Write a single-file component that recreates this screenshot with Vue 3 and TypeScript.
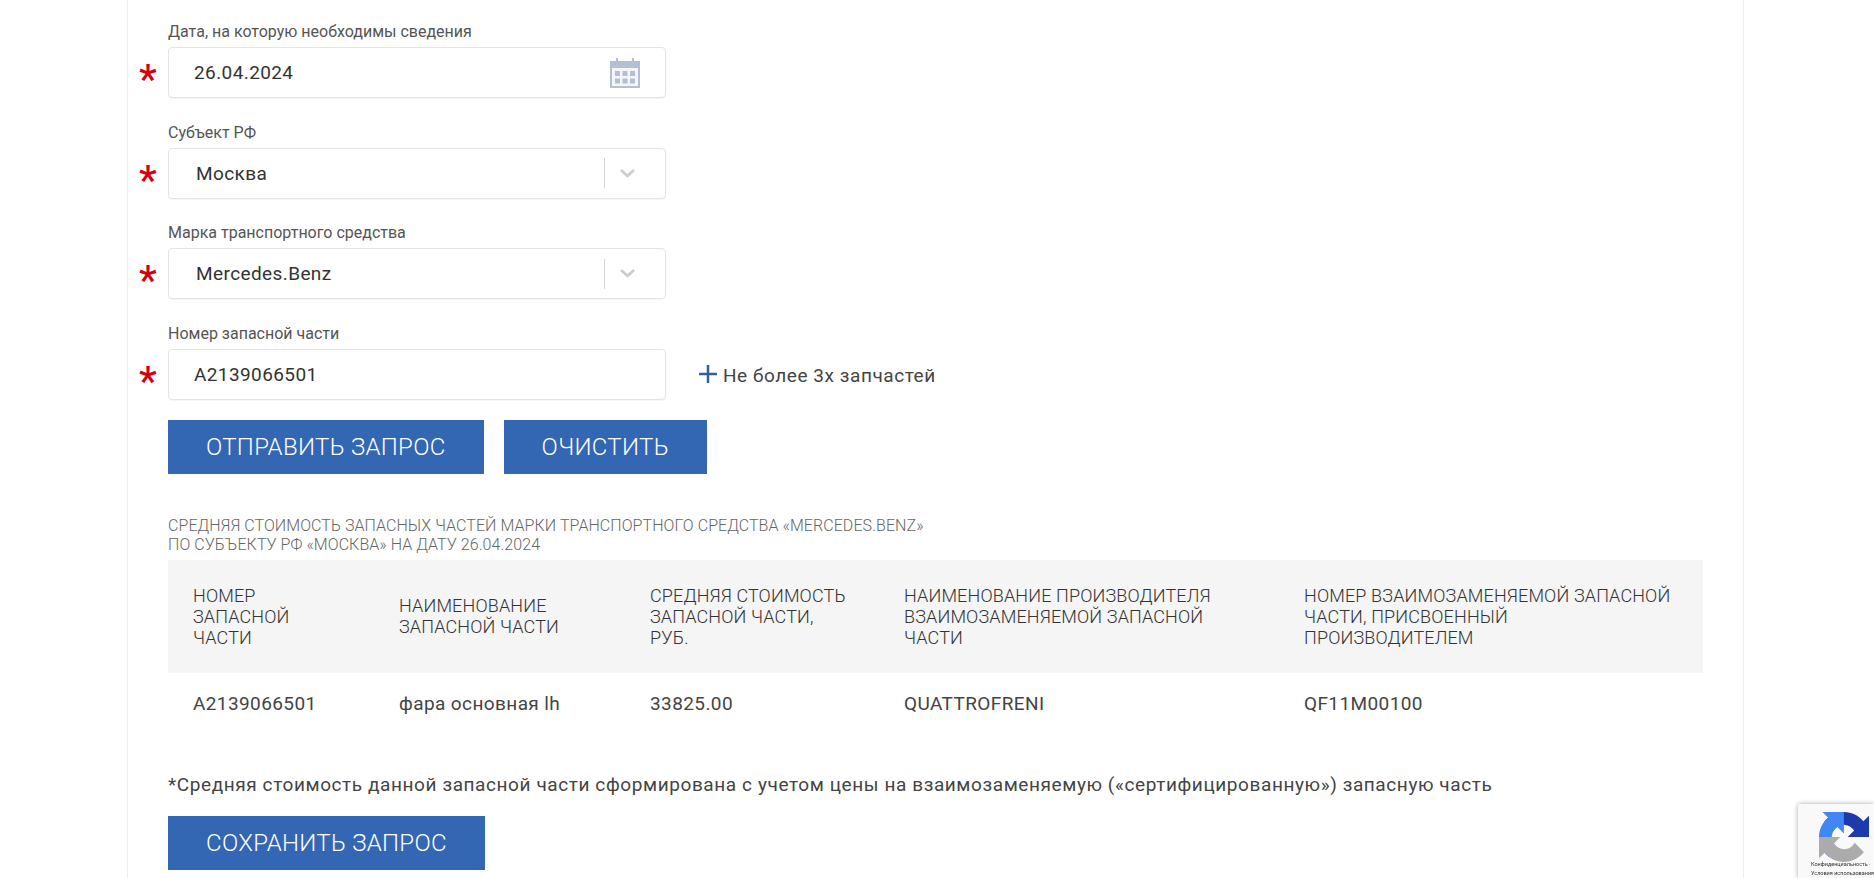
<script setup lang="ts">
interface Column { title: string; value: string; cls: string }

const columns: Column[] = [
  { title: 'Номер запасной части', value: 'A2139066501', cls: 'c1' },
  { title: 'Наименование запасной части', value: 'фара основная lh', cls: 'c2' },
  { title: 'Средняя стоимость запасной части, руб.', value: '33825.00', cls: 'c3' },
  { title: 'Наименование производителя взаимозаменяемой запасной части', value: 'QUATTROFRENI', cls: 'c4' },
  { title: 'Номер взаимозаменяемой запасной части, присвоенный производителем', value: 'QF11M00100', cls: 'c5' },
]
</script>

<template>
  <div class="page">
    <main class="card">
      <section class="field">
        <label class="label">Дата, на которую необходимы сведения</label>
        <div class="row">
          <span class="star">*</span>
          <div class="control date">
            <span class="value">26.04.2024</span>
            <svg class="cal" viewBox="0 0 30 30" width="30" height="30" aria-hidden="true">
              <path d="M0 3h30v27H0z" fill="#b3bfd3" />
              <path d="M2 10h26v18H2z" fill="#f3f5f9" />
              <path d="M6 0h2v6H6zM22 0h2v6h-2z" fill="#b3bfd3" />
              <path d="M5 13h5v5H5zM12.500 13h5v5h-5zM20 13h5v5h-5zM5 20.500h5v5H5zM12.500 20.500h5v5h-5zM20 20.500h5v5h-5z" fill="#b3bfd3" />
            </svg>
          </div>
        </div>
      </section>

      <section class="field">
        <label class="label">Субъект РФ</label>
        <div class="row">
          <span class="star">*</span>
          <div class="control select">
            <span class="value">Москва</span>
            <span class="sep"></span>
            <svg class="chev" viewBox="0 0 15 9" width="15" height="9" aria-hidden="true">
              <path d="M1 1l6.500 6 6.500-6" fill="none" stroke="#cccccc" stroke-width="2.600" />
            </svg>
          </div>
        </div>
      </section>

      <section class="field">
        <label class="label">Марка транспортного средства</label>
        <div class="row">
          <span class="star">*</span>
          <div class="control select">
            <span class="value">Mercedes.Benz</span>
            <span class="sep"></span>
            <svg class="chev" viewBox="0 0 15 9" width="15" height="9" aria-hidden="true">
              <path d="M1 1l6.500 6 6.500-6" fill="none" stroke="#cccccc" stroke-width="2.600" />
            </svg>
          </div>
        </div>
      </section>

      <section class="field last">
        <label class="label">Номер запасной части</label>
        <div class="row">
          <span class="star">*</span>
          <div class="control date">
            <span class="value">A2139066501</span>
          </div>
          <div class="add">
            <svg class="plus" viewBox="0 0 18 18" width="18" height="18" aria-hidden="true">
              <path d="M7.750 0h2.500v18h-2.500zM0 7.750h18v2.500H0z" fill="#2f5f9f" />
            </svg>
            <span>Не более 3х запчастей</span>
          </div>
        </div>
      </section>

      <div class="actions">
        <button class="btn send" type="button">Отправить запрос</button>
        <button class="btn clear" type="button">Очистить</button>
      </div>

      <h2 class="title">
        Средняя стоимость запасных частей марки транспортного средства «Mercedes.Benz»<br />
        по субъекту РФ «Москва» на дату 26.04.2024
      </h2>

      <table class="table">
        <thead>
          <tr>
            <th v-for="c in columns" :key="c.cls" :class="c.cls">{{ c.title }}</th>
          </tr>
        </thead>
        <tbody>
          <tr>
            <td v-for="c in columns" :key="c.cls">{{ c.value }}</td>
          </tr>
        </tbody>
      </table>

      <p class="note">*Средняя стоимость данной запасной части сформирована с учетом цены на взаимозаменяемую («сертифицированную») запасную часть</p>

      <button class="btn save" type="button">Сохранить запрос</button>
    </main>

    <aside class="badge">
      <svg class="logo" viewBox="0 0 64 64" width="50" height="50" aria-hidden="true">
        <path d="M64 31.955l-.033-1.37V4.687l-7.16 7.16C50.948 4.674 42.033.093 32.05.093c-10.4 0-19.622 4.96-25.458 12.64l11.736 11.86a15.55 15.55 0 0 1 4.754-5.334c2.05-1.6 4.952-2.906 8.968-2.906.485 0 .86.057 1.135.163 4.976.393 9.288 3.14 11.828 7.124l-8.307 8.307 26.29.001" fill="#1c3aa9" />
        <path d="M31.862.094l-1.37.033H4.594l7.16 7.16C4.58 13.147 0 22.06 0 32.046c0 10.4 4.96 19.622 12.64 25.458l11.86-11.736a15.55 15.55 0 0 1-5.334-4.754c-1.6-2.05-2.906-4.952-2.906-8.968 0-.485.057-.86.163-1.135.393-4.976 3.14-9.288 7.124-11.828l8.307 8.307V.094" fill="#4285f4" />
        <path d="M.001 32.045l.033 1.37v25.898l7.16-7.16c5.86 7.173 14.774 11.754 24.76 11.754 10.4 0 19.622-4.96 25.458-12.64l-11.736-11.86a15.55 15.55 0 0 1-4.754 5.334c-2.05 1.6-4.952 2.906-8.968 2.906-.485 0-.86-.057-1.135-.163-4.976-.393-9.288-3.14-11.828-7.124l8.307-8.307-26.29-.001" fill="#ababab" />
      </svg>
      <div class="legal">Конфиденциальность ·<br />Условия использования</div>
    </aside>
  </div>
</template>

<style>
html, body { margin: 0; background: #fff; overflow: hidden; }
</style>

<style scoped>
.page {
  height: 878px;
  overflow: hidden;
  background: #fff;
  font-family: Roboto, "Liberation Sans", sans-serif;
  color: #333;
}
.card {
  box-sizing: border-box;
  width: 1617px;
  height: 878px;
  margin-left: 127px;
  padding: 22px 40px 0 10px;
  border-left: 1px solid #ededed;
  border-right: 1px solid #ededed;
}
.field { margin-bottom: 24.670px; }
.field.last { margin-bottom: 20px; }
.label {
  display: block;
  margin-left: 30px;
  height: 20px;
  margin-bottom: 5px;
  font-size: 16px;
  line-height: 20px;
  color: #555;
}
.row { display: flex; align-items: center; }
.star {
  width: 30px;
  height: 51px;
  color: #d40010;
  font-size: 40px;
  font-weight: 500;
  line-height: 65px;
  padding-left: 1px;
  margin-right: -1px;
  text-align: left;
}
.control {
  box-sizing: border-box;
  width: 498px;
  height: 51px;
  display: flex;
  align-items: center;
  border: 1px solid #e4e4e4;
  border-radius: 4px;
  box-shadow: 0 1px 1px rgba(0, 0, 0, .04);
}
.value { flex: 1; font-size: 19px; letter-spacing: .4px; color: #333; }
.date { padding: 0 25px 0 25px; }
.select { padding: 0 30px 0 27px; }
.sep { width: 1px; height: 30px; background: #d4d4d4; margin-right: 15px; }
.add {
  display: flex;
  align-items: center;
  gap: 6px;
  margin-left: 33px;
  padding-top: 2px;
  font-size: 19px;
  letter-spacing: .55px;
  color: #444;
}
.plus { margin-bottom: 3px; }
.actions { display: flex; gap: 20px; margin-left: 30px; }
.btn {
  height: 54px;
  padding: 0 38px;
  border: 0;
  background: #3366b3;
  color: #fff;
  font-family: inherit;
  font-size: 24px;
  font-weight: 300;
  letter-spacing: .3px;
  text-transform: uppercase;
}
.title {
  margin: 42px 0 0 30px;
  font-size: 16px;
  font-weight: 300;
  letter-spacing: .07px;
  line-height: 19px;
  text-transform: uppercase;
  color: #666;
}
.table {
  width: 1535px;
  margin: 6px 0 0 30px;
  border-collapse: collapse;
  table-layout: fixed;
}
th {
  height: 113px;
  padding: 0 29px 0 25px;
  box-sizing: border-box;
  background: #f5f5f5;
  font-size: 18px;
  font-weight: 300;
  letter-spacing: .15px;
  line-height: 21px;
  text-align: left;
  text-transform: uppercase;
  color: #333;
}
td {
  height: 62px;
  padding: 0 25px;
  font-size: 19px;
  letter-spacing: .4px;
  color: #444;
}
.c1 { width: 206px; }
.c2 { width: 251px; }
.c3 { width: 254px; }
.c4 { width: 400px; }
.c5 { width: 424px; }
.note {
  margin: 39px 0 0 30px;
  font-size: 19px;
  line-height: 22px;
  letter-spacing: .59px;
  color: #444;
}
.save { display: block; margin: 20px 0 0 30px; }
.badge {
  position: fixed;
  right: 0;
  bottom: 0;
  box-sizing: border-box;
  width: 76px;
  height: 74px;
  padding-top: 8px;
  background: #f9f9f9;
  box-shadow: 0 0 5px rgba(0, 0, 0, .35);
  border-radius: 2px 0 0 0;
  overflow: hidden;
}
.logo { display: block; margin-left: 21px; }
.legal {
  margin-top: -2px;
  padding-left: 13px;
  font-size: 5.500px;
  line-height: 9px;
  white-space: nowrap;
  color: #333;
}
</style>
